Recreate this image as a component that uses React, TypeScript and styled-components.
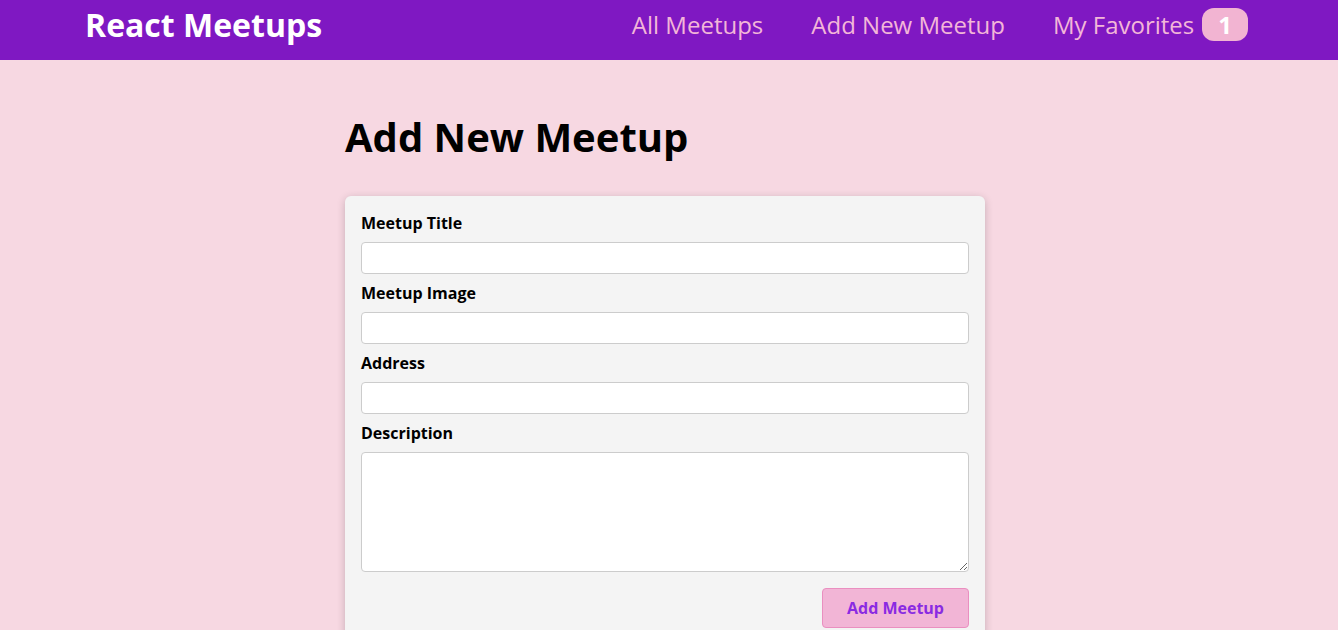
import React from "react";
import styled, { createGlobalStyle } from "styled-components";

const GlobalStyle = createGlobalStyle`
  * { box-sizing: border-box; }
  html { font-family: "Open Sans", "Noto Sans", sans-serif; }
  body { margin: 0; background-color: #f7d8e2; }
`;

const Header = styled.header`
  width: 100%;
  height: 60px;
  display: flex;
  align-items: center;
  justify-content: space-between;
  background-color: #7f18c2;
  padding: 0 90px 12px 85px;
`;

const Logo = styled.div`
  font-size: 32px;
  color: white;
  font-weight: bold;
`;

const NavList = styled.ul`
  list-style: none;
  margin: 0;
  padding: 0;
  display: flex;
  align-items: baseline;
`;

const NavItem = styled.li`
  margin-left: 48px;
`;

const NavLink = styled.a`
  text-decoration: none;
  font-size: 24px;
  color: #f3b6d8;
  cursor: pointer;
`;

const Badge = styled.span`
  background-color: #f2b4d2;
  color: white;
  font-weight: bold;
  border-radius: 12px;
  padding: 0 16px;
  margin-left: 8px;
`;

const Page = styled.div`
  padding-right: 8px;
`;

const Main = styled.main`
  width: 640px;
  margin: 49px auto 48px;
`;

const Title = styled.h1`
  font-size: 40px;
  margin: 0 0 32px;
  color: #000;
`;

const Card = styled.div`
  background-color: #f4f4f4;
  border-radius: 6px;
  box-shadow: 0 2px 8px rgba(0, 0, 0, 0.2);
`;

const Form = styled.form`
  padding: 16px;
`;

const Control = styled.div`
  margin-bottom: 8px;
`;

const Label = styled.label`
  display: block;
  font-weight: bold;
  margin-bottom: 8px;
  font-size: 16px;
  color: #000;
`;

const fieldCss = `
  display: block;
  font: inherit;
  font-size: 16px;
  border-radius: 4px;
  border: 1px solid #ccc;
  padding: 4px;
  width: 100%;
  background: white;
`;

const Input = styled.input`
  ${fieldCss}
`;

const TextArea = styled.textarea`
  ${fieldCss}
`;

const Actions = styled.div`
  margin-top: 16px;
  text-align: right;
`;

const Button = styled.button`
  font: inherit;
  font-size: 16px;
  cursor: pointer;
  background-color: #f2b5d6;
  color: #8a2be2;
  padding: 8px 24px;
  border: 1px solid #ea8fc0;
  border-radius: 4px;
  font-weight: bold;
`;

export default function App() {
  return (
    <>
      <GlobalStyle />
      <Header>
        <Logo>React Meetups</Logo>
        <nav>
          <NavList>
            <NavItem>
              <NavLink>All Meetups</NavLink>
            </NavItem>
            <NavItem>
              <NavLink>Add New Meetup</NavLink>
            </NavItem>
            <NavItem>
              <NavLink>
                My Favorites<Badge>1</Badge>
              </NavLink>
            </NavItem>
          </NavList>
        </nav>
      </Header>
      <Page>
        <Main>
          <Title>Add New Meetup</Title>
          <Card>
            <Form onSubmit={(e) => e.preventDefault()}>
              <Control>
                <Label htmlFor="title">Meetup Title</Label>
                <Input type="text" id="title" />
              </Control>
              <Control>
                <Label htmlFor="image">Meetup Image</Label>
                <Input type="url" id="image" />
              </Control>
              <Control>
                <Label htmlFor="address">Address</Label>
                <Input type="text" id="address" />
              </Control>
              <Control>
                <Label htmlFor="description">Description</Label>
                <TextArea id="description" rows={5} />
              </Control>
              <Actions>
                <Button>Add Meetup</Button>
              </Actions>
            </Form>
          </Card>
        </Main>
      </Page>
    </>
  );
}
